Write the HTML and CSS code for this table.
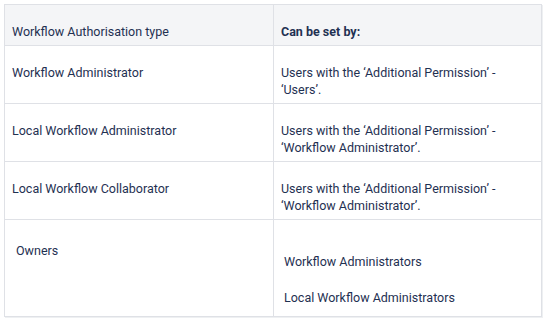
FILE: index.html
```html
<!DOCTYPE html>
<html lang="en">
<head>
    <meta charset="UTF-8">
    <meta name="viewport" content="width=device-width, initial-scale=1.0">
    <title>Workflow Authorisation</title>
    <link rel="stylesheet" href="styles.css">
</head>
<body>
    <table class="auth-table">
        <colgroup>
            <col class="col-type">
            <col class="col-set">
        </colgroup>
        <thead>
            <tr>
                <th>Workflow Authorisation type</th>
                <th class="strong">Can be set by:</th>
            </tr>
        </thead>
        <tbody>
            <tr>
                <td>Workflow Administrator</td>
                <td>Users with the ‘Additional Permission’ - ‘Users’.</td>
            </tr>
            <tr>
                <td>Local Workflow Administrator</td>
                <td>Users with the ‘Additional Permission’ - ‘Workflow Administrator’.</td>
            </tr>
            <tr>
                <td>Local Workflow Collaborator</td>
                <td>Users with the ‘Additional Permission’ - ‘Workflow Administrator’.</td>
            </tr>
            <tr class="owners-row">
                <td><p class="owners">Owners</p></td>
                <td>
                    <p class="setter">Workflow Administrators</p>
                    <p class="setter">Local Workflow Administrators</p>
                </td>
            </tr>
        </tbody>
    </table>
</body>
</html>
```

FILE: styles.css
```css
body {
    font-family: Roboto, "Liberation Sans", Arial, sans-serif;
    background-color: #fff;
    color: #1f3152;
    margin: 0;
    padding: 4px;
}

.auth-table {
    width: 538px;
    border-collapse: collapse;
    table-layout: fixed;
    font-size: 12.5px;
    line-height: 17px;
    box-shadow: 1px 1px 0 #eef0f2;
}

.col-type {
    width: 269px;
}

.auth-table th,
.auth-table td {
    border: 1px solid #dfe1e6;
    padding: 18px 7px 5px;
    text-align: left;
    vertical-align: top;
}

.auth-table th {
    background: #f4f5f7;
    font-weight: normal;
    height: 17px;
}

.auth-table th.strong {
    font-weight: bold;
}

.auth-table tbody td {
    height: 34px;
}

.auth-table tbody .owners-row td {
    height: 73px;
}

.owners {
    margin: 4px 0 0 4px;
}

.setter {
    margin: 0 0 19px 3px;
}

.setter:first-child {
    margin-top: 15px;
}

.setter:last-child {
    margin-bottom: 0;
}
```
